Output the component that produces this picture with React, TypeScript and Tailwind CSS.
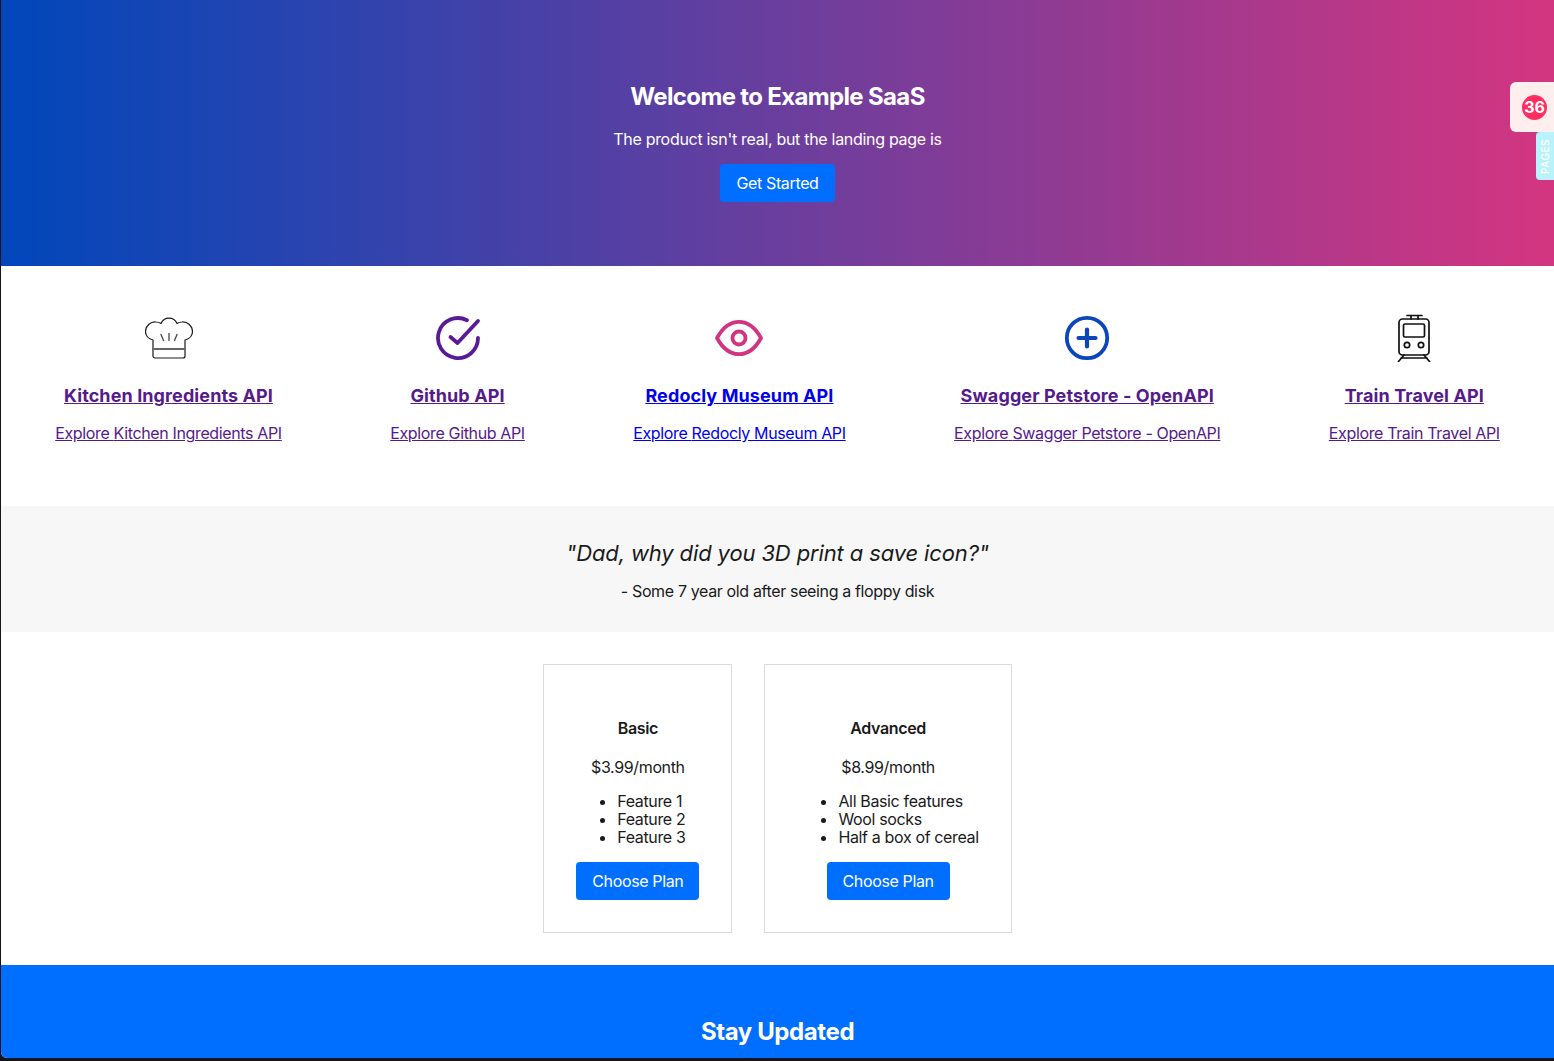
import React from "react";

// Feature icons, all drawn on a 48 box
const ChefIcon = () => (
  <svg width="48" height="48" viewBox="0 0 48 48" fill="none" stroke="#1a1a1a" strokeWidth="1.2" strokeLinecap="round" strokeLinejoin="round">
    <path d="M8 34V26C3.500 25 0.500 21.500 0.500 17.500C0.500 12 5.500 7.500 11 8C12.500 8 14.500 8.500 16 9.500C17.500 6 20.500 4.200 24 4.200C27.500 4.200 30.500 6 32 9.500C33.500 8.500 35.500 8 37 8C42.500 7.500 47.500 12 47.500 17.500C47.500 21.500 44.500 25 40 26V42C40 43 39 44 38 44H10C9 44 8 43 8 42V34" />
    <path d="M8 35H40" strokeWidth="1.800" stroke="#666" />
    <path d="M16 20.500L18.500 26.500M24 19.500V26.500M32 20.500L29.500 26.500" strokeWidth="1.300" stroke="#444" />
  </svg>
);

const CheckIcon = () => (
  <svg width="48" height="48" viewBox="0 0 48 48" fill="none" stroke="#5a1a95" strokeWidth="3.800" strokeLinecap="round" strokeLinejoin="round">
    <path d="M33 6.200A20 20 0 1 0 44 24" />
    <path d="M16.500 23L23.500 29L44 7" />
  </svg>
);

const EyeIcon = () => (
  <svg width="48" height="48" viewBox="0 0 48 48" fill="none" stroke="#d13582" strokeWidth="3.800" strokeLinecap="round" strokeLinejoin="round">
    <path d="M2 24C8 13 15 7.800 24 7.800C33 7.800 40 13 46 24C40 35 33 40.200 24 40.200C15 40.200 8 35 2 24Z" />
    <circle cx="24" cy="24" r="6.500" />
  </svg>
);

const PlusIcon = () => (
  <svg width="48" height="48" viewBox="0 0 48 48" fill="none" stroke="#0b47bb" strokeWidth="3.800" strokeLinecap="round">
    <circle cx="24" cy="24" r="20.200" />
    <path d="M24 15.500V32.500M15.500 24H32.500" strokeWidth="4.200" />
  </svg>
);

const TrainIcon = () => (
  <svg width="48" height="48" viewBox="0 0 48 48" fill="none" stroke="#111" strokeWidth="1.700" strokeLinejoin="round" strokeLinecap="round">
    <path d="M17 1.500H32M21 1.500V5M28 1.500V5" />
    <rect x="9" y="5" width="30" height="36" rx="3.500" />
    <rect x="13.500" y="10" width="21" height="13" rx="1.500" />
    <circle cx="17" cy="31" r="2.700" />
    <circle cx="31" cy="31" r="2.700" />
    <path d="M14 41L8.500 47.500M34 41L39.500 47.500M11 44H37" />
  </svg>
);

const features = [
  { icon: <ChefIcon />, name: "Kitchen Ingredients API", color: "text-[#551a8b]" },
  { icon: <CheckIcon />, name: "Github API", color: "text-[#551a8b]" },
  { icon: <EyeIcon />, name: "Redocly Museum API", color: "text-[#0000ee]" },
  { icon: <PlusIcon />, name: "Swagger Petstore - OpenAPI", color: "text-[#551a8b]" },
  { icon: <TrainIcon />, name: "Train Travel API", color: "text-[#551a8b]" },
];

const PlanCard = ({ title, price, items }: { title: string; price: string; items: string[] }) => (
  <div className="flex h-[269px] flex-col items-center border border-[#d9d9d9] px-8 pt-[54px]">
    <h3 className="text-base leading-[18px] font-semibold">{title}</h3>
    <p className="mt-[21px] text-base leading-[18px]">{price}</p>
    <ul className="mt-4 w-full list-disc pl-[41px] text-base leading-[18px]">
      {items.map((item) => (
        <li key={item} className="whitespace-nowrap">
          {item}
        </li>
      ))}
    </ul>
    <button className="mt-4 h-[38px] rounded-[4px] bg-[#006fff] px-4 text-base text-white">Choose Plan</button>
  </div>
);

export default function App() {
  return (
    <div className="relative h-[1061px] overflow-hidden bg-[#14141f] pb-[3px] pl-px font-['Inter',sans-serif] tracking-[-0.36px] text-[#1a1a1a]">
      <div className="h-full overflow-hidden rounded-bl-[6px] bg-white">
        <header className="flex h-[266px] flex-col items-center bg-linear-to-r/srgb from-[#0047bb] to-[#d33580] pt-[80px] text-white">
          <h1 className="text-2xl leading-[34px] font-bold tracking-[-0.65px]">Welcome to Example SaaS</h1>
          <p className="mt-[15px] text-base leading-[20px] tracking-[-0.3px]">The product isn't real, but the landing page is</p>
          <button className="mt-[15px] h-[38px] rounded-[4px] bg-[#006fff] px-4 text-base text-white">Get Started</button>
        </header>

        <section className="flex h-[240px] justify-around pt-[48px]">
          {features.map((f) => (
            <div key={f.name} className={`flex flex-col items-center ${f.color}`}>
              {f.icon}
              <a href="#" className="mt-[21px] text-lg leading-[26px] font-bold tracking-[0.1px] underline">
                {f.name}
              </a>
              <a href="#" className="mt-[14px] text-base leading-[20px] underline">
                Explore {f.name}
              </a>
            </div>
          ))}
        </section>

        <section className="flex h-[126px] flex-col items-center bg-[#f7f7f7] pt-[32px]">
          <p className="text-[22px] leading-[30px] tracking-[-0.13px] italic">"Dad, why did you 3D print a save icon?"</p>
          <p className="mt-[13px] text-base leading-[20px]">- Some 7 year old after seeing a floppy disk</p>
        </section>

        <section className="flex h-[333px] justify-center gap-8 pt-8">
          <PlanCard title="Basic" price="$3.99/month" items={["Feature 1", "Feature 2", "Feature 3"]} />
          <PlanCard title="Advanced" price="$8.99/month" items={["All Basic features", "Wool socks", "Half a box of cereal"]} />
        </section>

        <section className="flex h-[96px] flex-col items-center bg-[#006fff] pt-[50px] text-white">
          <h2 className="text-2xl leading-[34px] font-bold tracking-[-0.4px]">Stay Updated</h2>
        </section>
      </div>

      {/* floating widgets on the right edge */}
      <div className="absolute top-[82px] right-0 flex h-[50px] w-[44px] items-center rounded-l-[6px] bg-[#ffeeee] pl-[12px]">
        <span className="flex h-[25px] w-[25px] items-center justify-center rounded-full bg-[#ff2d60] text-[16px] font-bold tracking-normal text-white">36</span>
      </div>
      <div className="absolute top-[132px] right-0 flex h-[48px] w-[18px] items-center justify-center rounded-l-[4px] bg-[#b8f3fb]">
        <span className="-rotate-90 text-[10px] font-medium tracking-[0.5px] text-white">PAGES</span>
      </div>
    </div>
  );
}
